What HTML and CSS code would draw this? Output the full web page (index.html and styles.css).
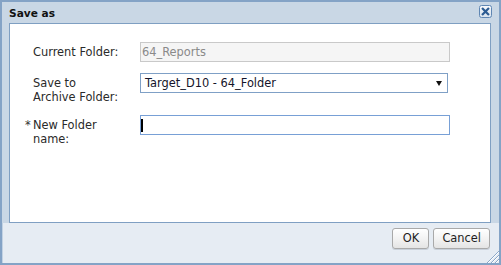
FILE: index.html
```html
<!DOCTYPE html>
<html>
<head>
<meta charset="utf-8">
<link rel="stylesheet" href="styles.css">
</head>
<body>
<div class="dialog">
  <div class="titlebar">
    <span class="title">Save as</span>
    <button class="close" aria-label="Close">
      <svg width="13" height="13" viewBox="0 0 13 13">
        <defs>
          <linearGradient id="cg" x1="0" y1="0" x2="0" y2="1">
            <stop offset="0" stop-color="#f7f9fc"/>
            <stop offset="1" stop-color="#d7e2ed"/>
          </linearGradient>
        </defs>
        <rect x="0.5" y="0.5" width="12" height="12" rx="2" fill="url(#cg)" stroke="#5f86b3"/>
        <path d="M3.8 3.8 L9.2 9.2 M9.2 3.8 L3.8 9.2" stroke="#2b5b92" stroke-width="2.2" stroke-linecap="square"/>
      </svg>
    </button>
  </div>
  <div class="content">
    <div class="form">
      <div class="label">Current Folder:</div>
      <div class="field readonly">64_Reports</div>
      <div class="label">Save to<br>Archive Folder:</div>
      <div class="field select">Target_D10 - 64_Folder<span class="arrow"></span></div>
      <div class="label"><span class="req">*</span>New Folder<br>name:</div>
      <div class="field focus"><span class="caret"></span></div>
    </div>
  </div>
  <div class="footer">
    <button class="btn ok">OK</button>
    <button class="btn">Cancel</button>
  </div>
  <svg class="grip" width="14" height="13" viewBox="0 0 14 13">
    <path d="M2 13 L14 1 M6 13 L14 5 M10 13 L14 9" stroke="#8aa7c8" stroke-width="1"/>
    <path d="M3 13 L14 2 M7 13 L14 6 M11 13 L14 10" stroke="#ffffff" stroke-width="1"/>
  </svg>
</div>
</body>
</html>
```

FILE: styles.css
```css
html, body {
  margin: 0;
  padding: 0;
}

body {
  width: 501px;
  height: 265px;
  background: #ffffff;
  font-family: "DejaVu Sans", Verdana, sans-serif;
  font-size: 11.4px;
  color: #222;
}

.dialog {
  position: relative;
  box-sizing: border-box;
  width: 501px;
  height: 265px;
  border: 2px solid #84a3c6;
  background: #c9d7e5;
  display: flex;
  flex-direction: column;
}

.titlebar {
  height: 21px;
  flex: none;
  display: flex;
  align-items: center;
  justify-content: space-between;
  padding: 0 7px;
}

.title {
  font-size: 10.6px;
  font-weight: bold;
  color: #111;
}

.close {
  align-self: flex-start;
  margin-top: 3px;
  padding: 0;
  border: 0;
  background: none;
  width: 13px;
  height: 13px;
  display: block;
}

.close svg {
  display: block;
}

.content {
  flex: none;
  height: 200px;
  box-sizing: border-box;
  margin: 0 8px 0 7px;
  background: #ffffff;
  border: 1px solid #7f9fc2;
  padding: 18px 0 0 23px;
}

.form {
  display: grid;
  grid-template-columns: 107px 310px;
  row-gap: 11px;
  align-items: start;
}

.label {
  padding-top: 3px;
  line-height: 14px;
  color: #2a2a2a;
}

.req {
  display: inline-block;
  width: 8px;
  margin-left: -8px;
  color: #333;
}

.field {
  box-sizing: border-box;
  height: 20px;
  border: 1px solid #7fa0c6;
  line-height: 18px;
  display: flex;
  align-items: center;
  white-space: nowrap;
}

.readonly {
  border-color: #c9c9c9;
  background: #f5f5f5;
  color: #8a8a8a;
  padding-left: 1px;
}

.select {
  width: 308px;
  padding-left: 4px;
  color: #14142a;
  justify-content: space-between;
  padding-right: 5px;
}

.arrow {
  width: 0;
  height: 0;
  border-left: 3px solid transparent;
  border-right: 3px solid transparent;
  border-top: 5px solid #111;
}

.focus {
  border-color: #78a0d6;
  background: #ffffff;
}

.caret {
  display: block;
  width: 1.5px;
  height: 13px;
  background: #000;
}

.footer {
  flex: 1;
  display: flex;
  justify-content: flex-end;
  align-items: flex-start;
  gap: 4px;
  padding: 5px 9px 0 0;
  background: #e6ecf3;
  box-shadow: inset 1px 0 0 #c2d2e3;
}

.btn {
  box-sizing: border-box;
  height: 21px;
  padding: 0 8px;
  border: 1px solid #a9a9a9;
  border-radius: 3px;
  background: linear-gradient(#ffffff, #f3f3f3 50%, #e4e4e4);
  box-shadow: inset 0 1px 0 #ffffff, 0 1px 0 #c8d0da;
  font-family: "DejaVu Sans", Verdana, sans-serif;
  font-size: 11.4px;
  color: #1e1e1e;
  line-height: 19px;
}

.ok {
  min-width: 37px;
}

.grip {
  position: absolute;
  right: 0;
  bottom: 0;
  display: block;
}
```
